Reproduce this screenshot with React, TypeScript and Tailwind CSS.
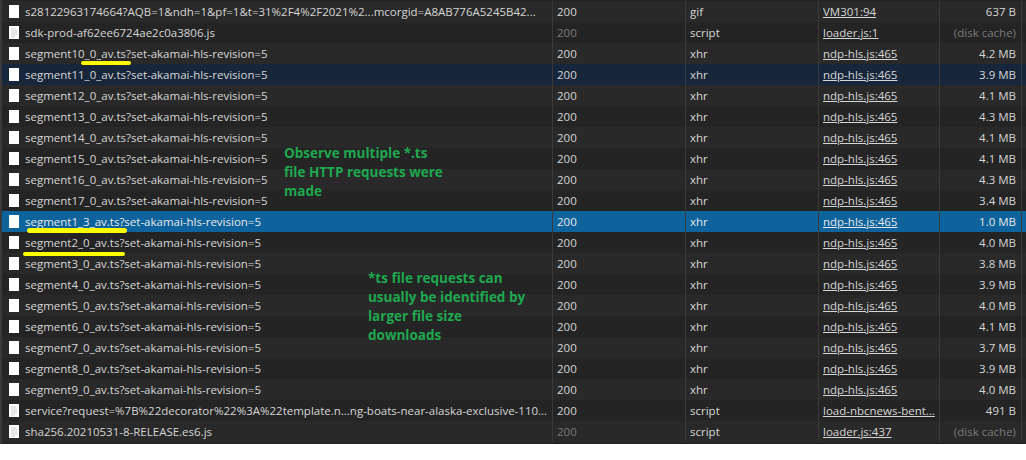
const font = { fontFamily: '"Open Sans", sans-serif' };

type Row = { name: string; status: string; type: string; init: string; size: string; doc?: boolean; dim?: boolean; sel?: boolean; hover?: boolean };

const seg = (n: string, size: string, extra: Partial<Row> = {}): Row => ({
  name: `segment${n}_av.ts?set-akamai-hls-revision=5`,
  status: "200",
  type: "xhr",
  init: "ndp-hls.js:465",
  size,
  ...extra,
});

const rows: Row[] = [
  { name: "s28122963174664?AQB=1&ndh=1&pf=1&t=31%2F4%2F2021%2...mcorgid=A8AB776A5245B42...", status: "200", type: "gif", init: "VM301:94", size: "637 B" },
  { name: "sdk-prod-af62ee6724ae2c0a3806.js", status: "200", type: "script", init: "loader.js:1", size: "(disk cache)", doc: true, dim: true },
  seg("10_0", "4.2 MB"),
  seg("11_0", "3.9 MB", { hover: true }),
  seg("12_0", "4.1 MB"),
  seg("13_0", "4.3 MB"),
  seg("14_0", "4.1 MB"),
  seg("15_0", "4.1 MB"),
  seg("16_0", "4.3 MB"),
  seg("17_0", "3.4 MB"),
  seg("1_3", "1.0 MB", { sel: true }),
  seg("2_0", "4.0 MB"),
  seg("3_0", "3.8 MB"),
  seg("4_0", "3.9 MB"),
  seg("5_0", "4.0 MB"),
  seg("6_0", "4.1 MB"),
  seg("7_0", "3.7 MB"),
  seg("8_0", "3.9 MB"),
  seg("9_0", "4.0 MB"),
  { name: "service?request=%7B%22decorator%22%3A%22template.n...ng-boats-near-alaska-exclusive-110...", status: "200", type: "script", init: "load-nbcnews-bent...", size: "491 B", doc: true },
  { name: "sha256.20210531-8-RELEASE.es6.js", status: "200", type: "script", init: "loader.js:437", size: "(disk cache)", doc: true, dim: true },
];

function FileIcon({ doc }: { doc?: boolean }) {
  return (
    <svg width="10" height="13" viewBox="0 0 10 13" className="shrink-0">
      <rect width="10" height="13" fill="#ffffff" />
      {doc && <path d="M2 3h5M2 5h6M2 7h6M2 9h6M2 11h4" stroke="#cfcfcf" strokeWidth="1" />}
    </svg>
  );
}

export default function App() {
  return (
    <div className="relative h-[460px] w-[1026px] overflow-hidden bg-white text-[11.5px] text-[#d6d6d6]" style={font}>
      <div className="border-l-2 border-[#3a3a3a] bg-[#242424] pt-px pb-[2px]">
        {rows.map((r, i) => (
          <div
            key={i}
            className={`grid h-[21px] grid-cols-[551px_133px_133px_121px_82px_1fr] items-center leading-none ${
              r.sel ? "bg-[#0e639c] text-[#e8e8e8]" : r.hover ? "bg-[#17263b]" : i % 2 === 0 ? "bg-[#292929]" : "bg-[#242424]"
            }`}
          >
            <div className="flex h-full min-w-0 items-center gap-[6px] border-r border-[#3a3a3a] pl-[7px]">
              <FileIcon doc={r.doc} />
              <span className="whitespace-nowrap">{r.name}</span>
            </div>
            <div className={`flex h-full items-center border-r border-[#3a3a3a] pl-[4px] ${r.dim ? "text-[#7a7a7a]" : ""}`}>{r.status}</div>
            <div className="flex h-full items-center border-r border-[#3a3a3a] pl-[4px]">{r.type}</div>
            <div className="flex h-full items-center border-r border-[#3a3a3a] pl-[4px]">
              <span className="whitespace-nowrap underline">{r.init}</span>
            </div>
            <div className={`flex h-full items-center justify-end border-r border-[#3a3a3a] pr-[5px] ${r.dim ? "text-[#7a7a7a]" : ""}`}>{r.size}</div>
            <div />
          </div>
        ))}
      </div>

      <div className="absolute left-[81px] top-[61px] h-[4px] w-[50px] rounded-full bg-[#ffff00]" />
      <div className="absolute left-[27px] top-[228px] h-[5px] w-[100px] rounded-full bg-[#ffff00]" />
      <div className="absolute left-[23px] top-[252px] h-[4px] w-[102px] rounded-full bg-[#ffff00]" />

      <div className="absolute left-[284px] top-[144px] w-[162px] text-[13.5px] font-bold leading-[19px] text-[#1fa84f]">
        Observe multiple *.ts file HTTP requests were made
      </div>
      <div className="absolute left-[368px] top-[269px] w-[170px] text-[13.5px] font-bold leading-[19px] text-[#1fa84f]">
        *ts file requests can usually be identified by larger file size downloads
      </div>
    </div>
  );
}
